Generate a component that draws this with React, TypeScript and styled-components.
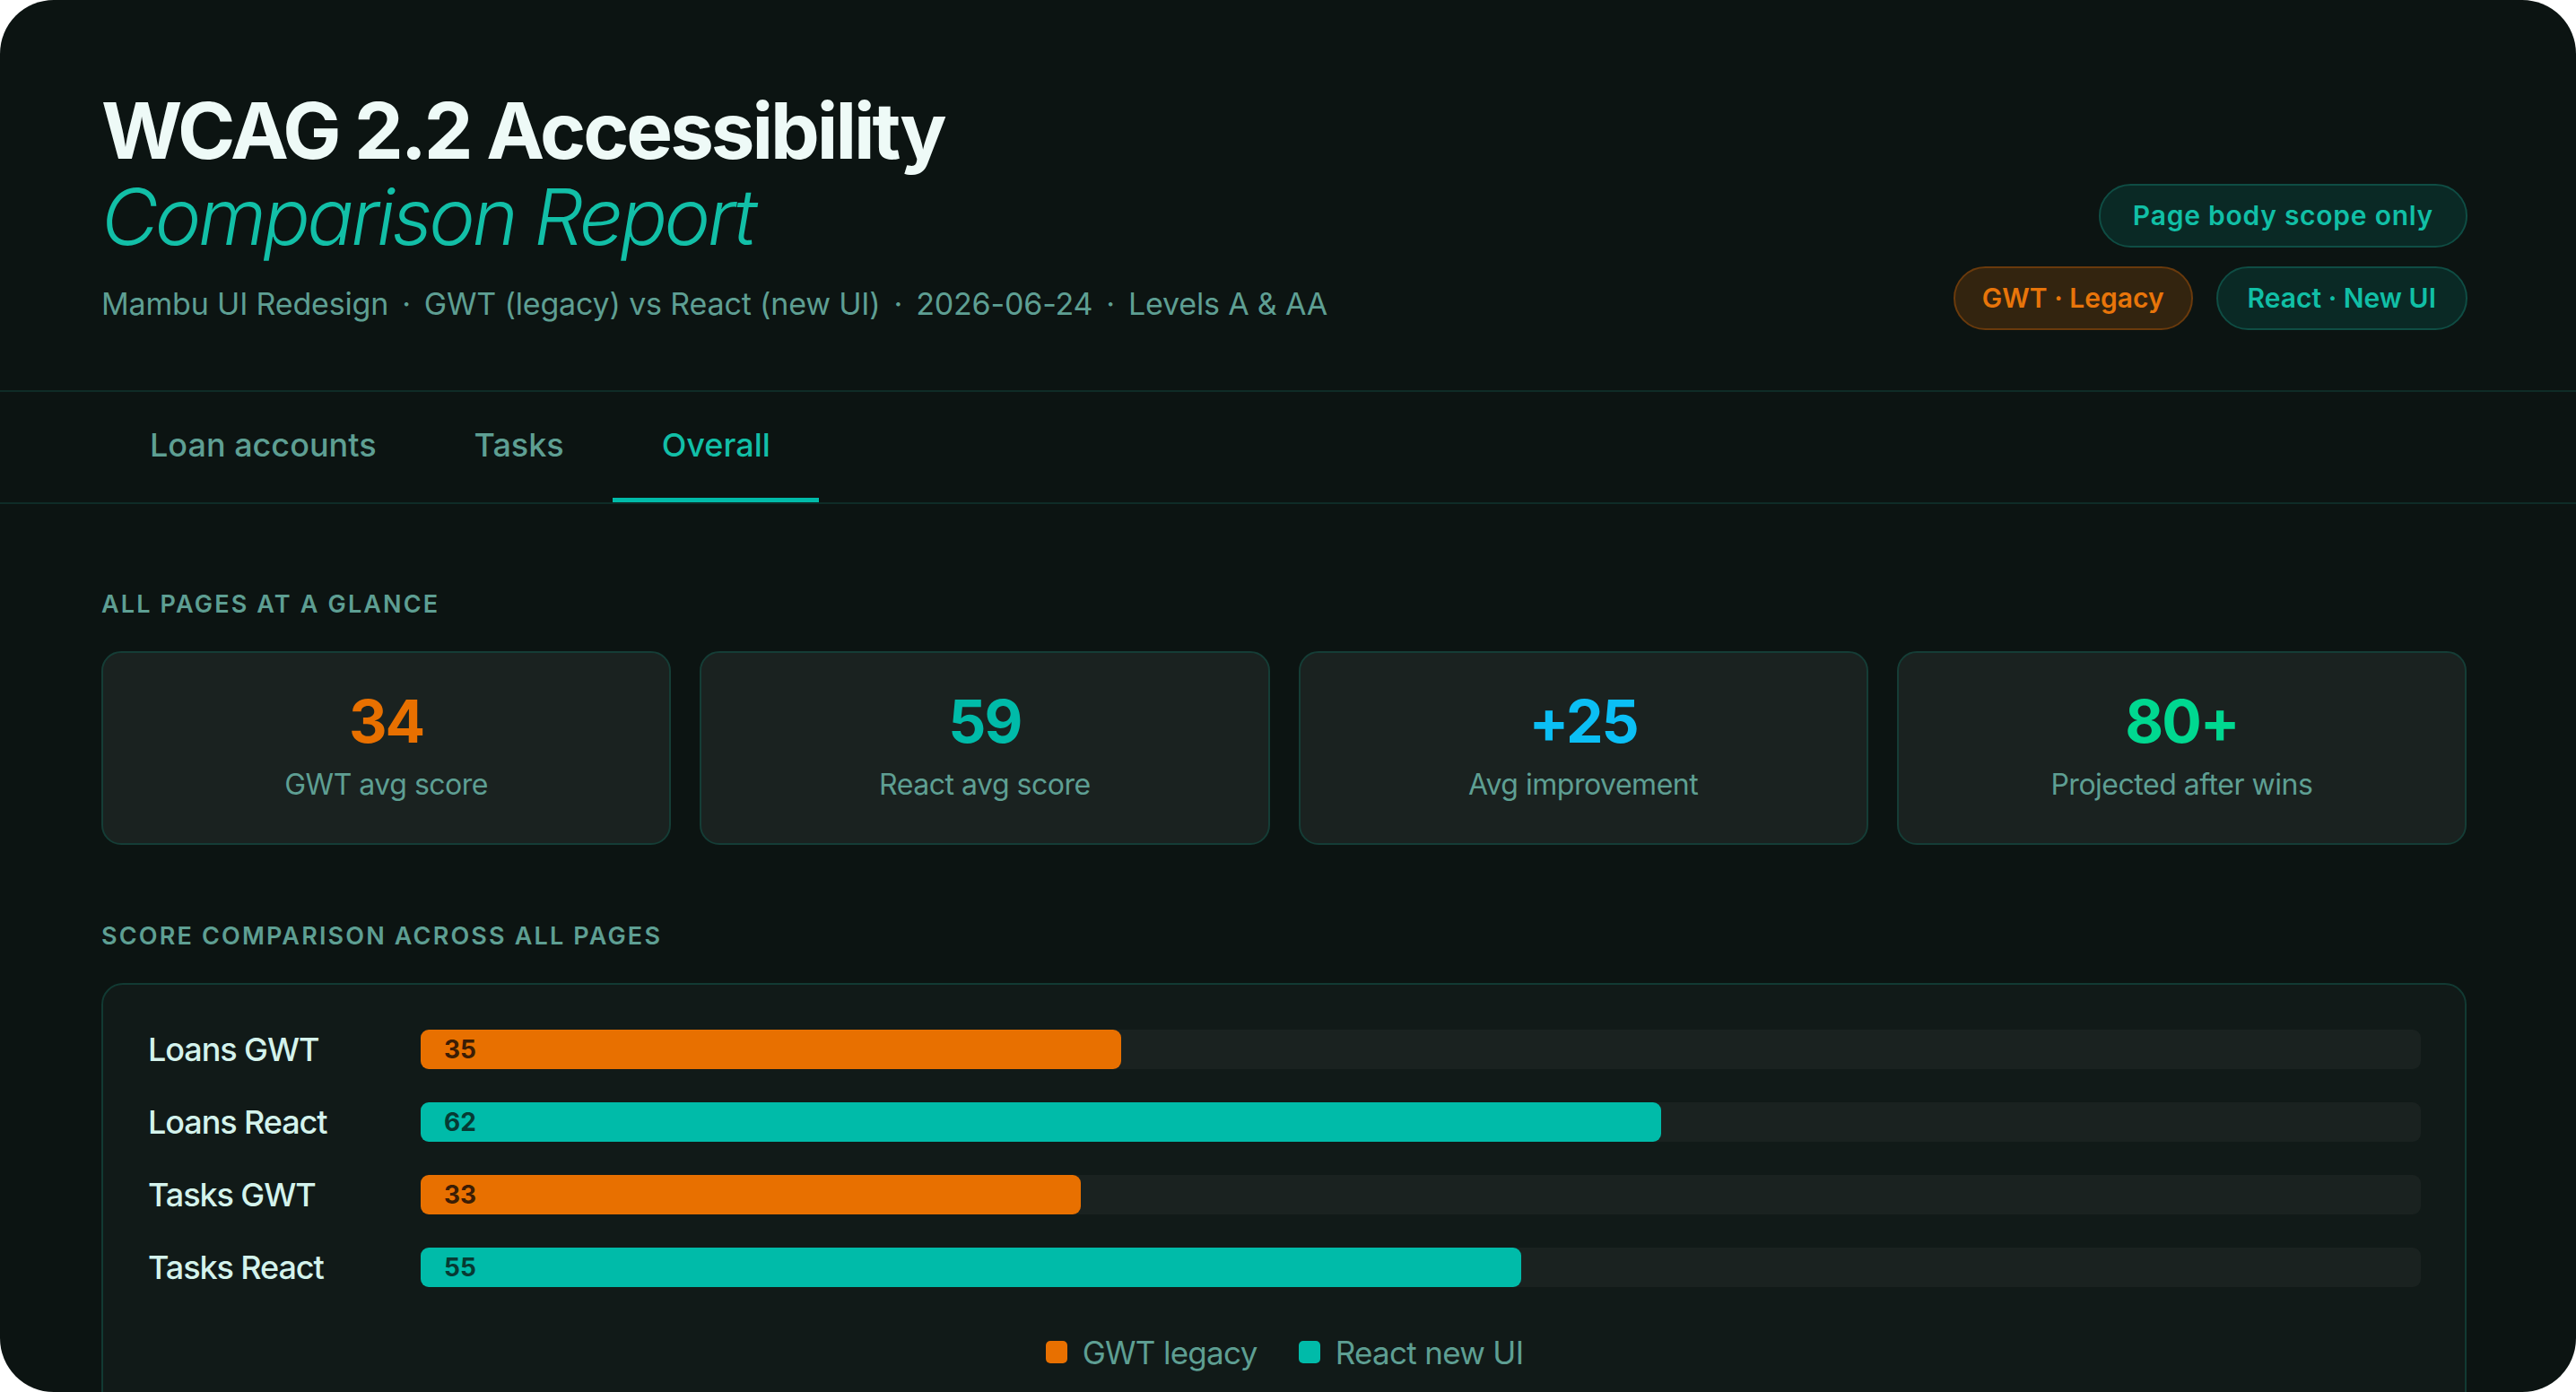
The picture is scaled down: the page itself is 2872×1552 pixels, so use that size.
import styled, { createGlobalStyle } from "styled-components"

const GlobalStyle = createGlobalStyle`
  html, body {
    margin: 0;
    padding: 0;
    background: #ffffff;
  }
  * {
    box-sizing: border-box;
  }
`

const stats = [
  { value: "34", label: "GWT avg score", color: "#e87000" },
  { value: "59", label: "React avg score", color: "#00bba9" },
  { value: "+25", label: "Avg improvement", color: "#0bbff5" },
  { value: "80+", label: "Projected after wins", color: "#00d890" },
]

const bars = [
  { label: "Loans GWT", score: 35, kind: "gwt" },
  { label: "Loans React", score: 62, kind: "react" },
  { label: "Tasks GWT", score: 33, kind: "gwt" },
  { label: "Tasks React", score: 55, kind: "react" },
] as const

const meta = ["Mambu UI Redesign", "GWT (legacy) vs React (new UI)", "2026-06-24", "Levels A & AA"]

export default function App() {
  return (
    <>
      <GlobalStyle />
      <Frame>
        <Header>
          <TitleBlock>
            <Title>
              WCAG 2.2 Accessibility
              <TitleAccent>Comparison Report</TitleAccent>
            </Title>
            <Meta>
              {meta.map((m, i) => (
                <span key={m}>
                  {i > 0 && <Dot>·</Dot>}
                  {m}
                </span>
              ))}
            </Meta>
          </TitleBlock>
          <Badges>
            <Badge tone="teal" $pad={36} $spacing="0.025em">Page body scope only</Badge>
            <BadgeRow>
              <Badge tone="orange" $pad={30}>GWT · Legacy</Badge>
              <Badge tone="teal" $pad={33}>React · New UI</Badge>
            </BadgeRow>
          </Badges>
        </Header>

        <Tabs>
          <Tab>Loan accounts</Tab>
          <Tab>Tasks</Tab>
          <Tab $active>Overall</Tab>
        </Tabs>

        <Content>
          <SectionLabel>All pages at a glance</SectionLabel>
          <Cards>
            {stats.map((s) => (
              <Card key={s.label}>
                <CardValue $color={s.color}>{s.value}</CardValue>
                <CardLabel>{s.label}</CardLabel>
              </Card>
            ))}
          </Cards>

          <SectionLabel $spaced>Score comparison across all pages</SectionLabel>
          <ChartPanel>
            <BarList>
              {bars.map((b) => (
                <BarRow key={b.label}>
                  <BarLabel>{b.label}</BarLabel>
                  <Track>
                    <Fill $kind={b.kind} style={{ width: `${b.score}%` }}>
                      {b.score}
                    </Fill>
                  </Track>
                </BarRow>
              ))}
            </BarList>
            <Legend>
              <LegendItem>
                <Swatch $kind="gwt" />
                GWT legacy
              </LegendItem>
              <LegendItem>
                <Swatch $kind="react" />
                React new UI
              </LegendItem>
            </Legend>
          </ChartPanel>
        </Content>
      </Frame>
    </>
  )
}

const Frame = styled.div`
  height: 100vh;
  overflow: hidden;
  border-radius: 60px;
  background: #0c1412;
  font-family: Inter, "Noto Sans", sans-serif;
  color: #eefaf7;
`

const Header = styled.header`
  display: flex;
  justify-content: space-between;
  align-items: flex-end;
  padding: 98px 121px 72px 113px;
  border-bottom: 2px solid #0f2c27;
`

const TitleBlock = styled.div`
  display: flex;
  flex-direction: column;
`

const Title = styled.h1`
  margin: 0;
  font-size: 87px;
  line-height: 1.1;
  font-weight: 700;
  letter-spacing: -0.035em;
  color: #eefaf7;
`

const TitleAccent = styled.span`
  display: block;
  font-weight: 300;
  font-style: italic;
  letter-spacing: -0.04em;
  color: #12bfa7;
`

const Meta = styled.div`
  margin-top: 26px;
  font-size: 34px;
  line-height: 1.4;
  color: #5e9f93;
  letter-spacing: -0.005em;
`

const Dot = styled.span`
  margin: 0 15px;
`

const Badges = styled.div`
  display: flex;
  flex-direction: column;
  align-items: flex-end;
  gap: 21px;
  margin-bottom: -5px;
`

const BadgeRow = styled.div`
  display: flex;
  gap: 26px;
`

const Badge = styled.span<{ tone: "teal" | "orange"; $pad: number; $spacing?: string }>`
  display: inline-flex;
  align-items: center;
  height: 71px;
  padding: 0 ${(p) => p.$pad}px;
  border-radius: 999px;
  font-size: 30px;
  font-weight: 600;
  letter-spacing: ${(p) => p.$spacing ?? "0"};
  background: ${(p) => (p.tone === "orange" ? "#33240f" : "#0a2925")};
  border: 2.5px solid ${(p) => (p.tone === "orange" ? "#6a3a0c" : "#0f4d44")};
  color: ${(p) => (p.tone === "orange" ? "#e8750a" : "#11bfa6")};
`

const Tabs = styled.nav`
  display: flex;
  padding: 0 111px;
  border-bottom: 2px solid #0f2c27;
`

const Tab = styled.div<{ $active?: boolean }>`
  display: flex;
  align-items: center;
  height: 123px;
  padding: 0 54px 0 55px;
  font-size: 36px;
  font-weight: 500;
  color: ${(p) => (p.$active ? "#12bfa7" : "#5e9f93")};
  border-bottom: 5px solid ${(p) => (p.$active ? "#00bba9" : "transparent")};

  &:first-child {
    padding-left: 56px;
  }
`

const Content = styled.main`
  padding: 0 122px 0 113px;
`

const SectionLabel = styled.div<{ $spaced?: boolean }>`
  margin: ${(p) => (p.$spaced ? "86px" : "96px")} 0 36px;
  font-size: 27px;
  line-height: 1.2;
  font-weight: 600;
  letter-spacing: 0.08em;
  text-transform: uppercase;
  color: #5e9f93;
`

const Cards = styled.div`
  display: grid;
  grid-template-columns: repeat(4, 1fr);
  gap: 32px;
`

const Card = styled.div`
  display: flex;
  flex-direction: column;
  align-items: center;
  padding: 40px 20px 44px;
  background: #1a2220;
  border: 2px solid #153d36;
  border-radius: 22px;
`

const CardValue = styled.div<{ $color: string }>`
  font-size: 66px;
  line-height: 1.1;
  font-weight: 700;
  letter-spacing: -0.03em;
  color: ${(p) => p.$color};
`

const CardLabel = styled.div`
  margin-top: 13px;
  font-size: 32px;
  line-height: 1.3;
  letter-spacing: -0.015em;
  color: #5e9f93;
`

const ChartPanel = styled.section`
  padding: 50px 49px 60px 50px;
  background: #111a18;
  border: 2px solid #123a33;
  border-radius: 24px;
`

const BarList = styled.div`
  display: flex;
  flex-direction: column;
  gap: 37px;
`

const BarRow = styled.div`
  display: grid;
  grid-template-columns: 280px 1fr;
  column-gap: 24px;
  align-items: center;
`

const BarLabel = styled.div`
  font-size: 36px;
  font-weight: 500;
  letter-spacing: -0.03em;
  color: #d4f3ec;
`

const Track = styled.div`
  height: 44px;
  border-radius: 9px;
  background: #1a2220;
`

const Fill = styled.div<{ $kind: "gwt" | "react" }>`
  display: flex;
  align-items: center;
  height: 100%;
  padding-left: 26px;
  border-radius: 9px;
  font-size: 28px;
  font-weight: 700;
  background: ${(p) => (p.$kind === "gwt" ? "#e87000" : "#00bba9")};
  color: ${(p) => (p.$kind === "gwt" ? "#3b1d05" : "#073a33")};
`

const Legend = styled.div`
  display: flex;
  justify-content: center;
  gap: 46px;
  margin-top: 52px;
`

const LegendItem = styled.div`
  display: flex;
  align-items: center;
  gap: 17px;
  font-size: 35px;
  line-height: 42px;
  letter-spacing: -0.02em;
  color: #5e9f93;
`

const Swatch = styled.span<{ $kind: "gwt" | "react" }>`
  width: 24px;
  height: 25px;
  border-radius: 5px;
  background: ${(p) => (p.$kind === "gwt" ? "#e87000" : "#00bba9")};
`
